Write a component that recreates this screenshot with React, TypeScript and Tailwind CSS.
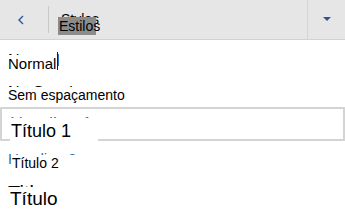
import React from 'react'

// styles pane with translated labels laid over the original ones
export default function App() {
  return (
    <div className="w-[345px] h-[219px] bg-white overflow-hidden font-['Liberation_Sans',Arial,sans-serif] text-black">
      {/* Header */}
      <div className="flex h-[40px] bg-[#e6e6e6] border-b border-[#d2d2d2]">
        <button className="w-[48px] flex items-center justify-center">
          <svg width="8" height="10" viewBox="0 0 8 10" className="ml-[-6px]">
            <polyline points="6,1 2,5 6,9" fill="none" stroke="#2b579a" strokeWidth="1.4" />
          </svg>
        </button>
        <div className="w-px h-[27px] mt-[6px] bg-[#c9c9c9]" />
        <div className="relative flex-1 pl-[12px] pt-[12px]">
          <span className="block text-[14px] leading-none">Styles</span>
          <span className="absolute left-[9px] top-[17px] w-[38px] h-[18px] bg-[#8c8c8c] text-[14px] leading-[18px] pl-[1px] whitespace-nowrap">Estilos</span>
        </div>
        <div className="w-px h-full bg-[#d4d4d4]" />
        <button className="w-[37px] flex items-center justify-center">
          <svg width="8" height="4" viewBox="0 0 8 4" className="mt-[-1px]">
            <polygon points="0,0 8,0 4,4" fill="#2b579a" />
          </svg>
        </button>
      </div>

      {/* Normal */}
      <div className="relative h-[33px] pt-[13px] pl-[8px]">
        <span className="block text-[16px] leading-none">Normal</span>
        <span className="absolute left-[7px] top-[15px] bg-white pl-[1px] pr-[2px] text-[15px] leading-[18px]">Normal</span>
        <span className="absolute left-[57px] top-[12px] w-px h-[18px] bg-[#1a1a3a]" />
      </div>

      {/* No Spacing */}
      <div className="relative h-[34px] pt-[12px] pl-[8px]">
        <span className="block text-[16px] leading-none">No Spacing</span>
        <span className="absolute left-[7px] top-[14px] bg-white pl-[1px] pr-[2px] text-[14px] leading-[17px]">Sem espaçamento</span>
      </div>

      {/* Heading 1 (selected) */}
      <div className="relative h-[34px] border-2 border-[#d4d4d4] pt-[6px] pl-[8px]">
        <span className="block text-[18px] leading-none text-[#2e74b5]">Heading 1</span>
        <span className="absolute left-[8px] top-[9px] w-[88px] h-[24px] bg-white pt-[2px] pl-[1px] text-[18px] leading-[22px]">Título 1</span>
      </div>

      {/* Heading 2 */}
      <div className="relative h-[33px] pt-[10px] pl-[8px]">
        <span className="block text-[15px] leading-none text-[#2e74b5]">Heading 2</span>
        <span className="absolute left-[11px] top-[14px] w-[76px] bg-white pl-[1px] text-[14px] leading-[17px]">Título 2</span>
      </div>

      {/* Title */}
      <div className="relative h-[45px] pt-[9px] pl-[8px]">
        <span className="block text-[20px] leading-none">Title</span>
        <span className="absolute left-[7px] top-[13px] w-[60px] bg-white pl-[3px] text-[19px] leading-[23px]">Título</span>
      </div>
    </div>
  )
}
